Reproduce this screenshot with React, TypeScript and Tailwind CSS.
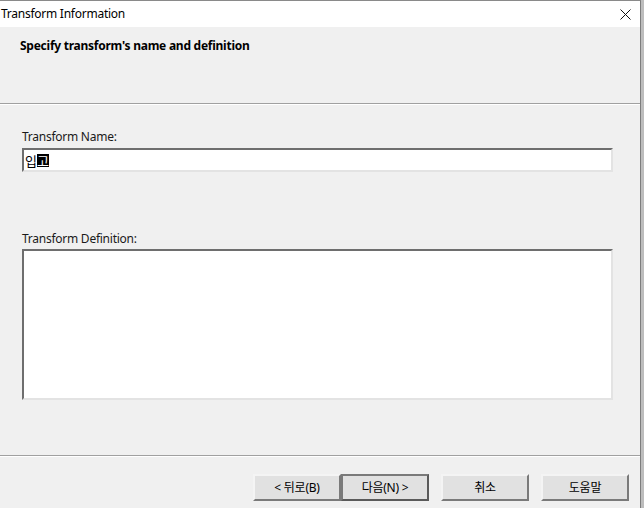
const ui = "font-['Segoe_UI','Noto_Sans','Noto_Sans_CJK_KR',sans-serif]";

function Button({ label, isDefault = false }: { label: string; isDefault?: boolean }) {
  return (
    <button
      className={`flex h-[27px] w-[88px] items-center justify-center bg-[#e1e1e1] text-[12px] text-black ${
        isDefault
          ? "border-2 border-t-[#7a7a7a] border-l-[#7a7a7a] border-r-[#5a5a5a] border-b-[#5a5a5a]"
          : "border-2 border-t-[#f4f4f4] border-l-[#f4f4f4] border-r-[#7a7a7a] border-b-[#7a7a7a]"
      }`}
    >
      {label}
    </button>
  );
}

export default function App() {
  return (
    <div className={`flex h-[508px] w-[644px] overflow-hidden bg-[#bdbdbd] tracking-[-0.25px] ${ui}`}>
      <div className="flex h-full w-[641px] flex-col border-r border-t border-r-[#7d7d7d] border-t-[#8a8a8a] bg-[#f0f0f0]">
        {/* title bar */}
        <div className="flex h-[26px] shrink-0 items-center justify-between bg-white pl-[1px] pr-[9px]">
          <span className="text-[12px] text-black">Transform Information</span>
          <svg width="11" height="11" viewBox="0 0 11 11" aria-hidden="true">
            <path d="M0.5 0.5 L10.5 10.5 M10.5 0.5 L0.5 10.5" stroke="#111" strokeWidth="1" />
          </svg>
        </div>

        {/* header */}
        <div className="h-[76px] shrink-0 px-[20px] pt-[10px]">
          <p className="text-[12px] font-bold text-black">Specify transform's name and definition</p>
        </div>
        <div className="h-[1px] shrink-0 bg-[#a0a0a0]" />
        <div className="h-[1px] shrink-0 bg-white" />

        {/* body */}
        <div className="flex flex-1 flex-col px-[22px] pt-[24px]">
          <label className="text-[12px] leading-[16px] text-[#1a1a1a]">Transform Name:</label>
          <div className="mt-[3px] flex h-[24px] w-[591px] items-center border-2 border-t-[#6e6e6e] border-l-[#6e6e6e] border-r-[#e3e3e3] border-b-[#e3e3e3] bg-white pl-[1px] text-[13px] leading-none tracking-normal">
            <span className="font-['Noto_Sans_CJK_KR',sans-serif] text-black">입</span>
            <span className="bg-black font-['Noto_Sans_CJK_KR',sans-serif] text-white">고</span>
          </div>

          <label className="mt-[59px] text-[12px] leading-[16px] text-[#1a1a1a]">Transform Definition:</label>
          <div className="mt-[2px] h-[151px] w-[591px] border-2 border-t-[#6e6e6e] border-l-[#6e6e6e] border-r-[#e3e3e3] border-b-[#e3e3e3] bg-white" />
        </div>

        {/* footer */}
        <div className="h-[1px] shrink-0 bg-[#a0a0a0]" />
        <div className="h-[1px] shrink-0 bg-white" />
        <div className="flex h-[51px] shrink-0 items-start pl-[253px] pt-[17px]">
          <Button label="< 뒤로(B)" />
          <Button label="다음(N) >" isDefault />
          <div className="w-[12px]" />
          <Button label="취소" />
          <div className="w-[12px]" />
          <Button label="도움말" />
        </div>
      </div>
    </div>
  );
}
